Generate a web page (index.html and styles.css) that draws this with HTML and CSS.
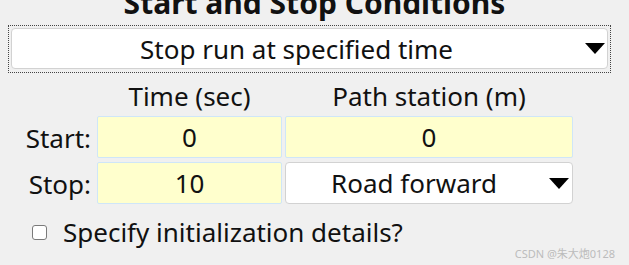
FILE: index.html
```html
<!DOCTYPE html>
<html lang="en">
<head>
  <meta charset="UTF-8">
  <title>Start and Stop Conditions</title>
  <link rel="stylesheet" href="styles.css">
</head>
<body>
  <div class="panel">
    <h1 class="title">Start and Stop Conditions</h1>

    <!-- Główny wybór warunku zatrzymania -->
    <div class="focus-ring">
      <div class="combo combo-main">
        <span class="combo-text">Stop run at specified time</span>
        <span class="arrow"></span>
      </div>
    </div>

    <div class="grid">
      <div></div>
      <div class="col-head">Time (sec)</div>
      <div class="col-head">Path station (m)</div>

      <div class="row-label">Start:</div>
      <div class="field">0</div>
      <div class="field">0</div>

      <div class="row-label">Stop:</div>
      <div class="field">10</div>
      <div class="combo combo-small">
        <span class="combo-text">Road forward</span>
        <span class="arrow"></span>
      </div>
    </div>

    <label class="check-row">
      <span class="checkbox"></span>
      <span>Specify initialization details?</span>
    </label>
  </div>

  <div class="watermark">CSDN @朱大炮0128</div>
</body>
</html>
```

FILE: styles.css
```css
html, body {
  margin: 0;
  height: 100%;
  overflow: hidden;
}
body {
  background-color: #f0f0f0;
  font-family: 'Noto Sans', 'Open Sans', sans-serif;
  color: #111;
  position: relative;
}
.panel {
  width: 629px;
}
.title {
  margin: -17px 0 0 0;
  height: 42px;
  text-align: center;
  font-size: 30px;
  font-weight: bold;
  line-height: 40px;
  color: #111;
}

/* Pole wyboru z kropkowaną ramką fokusu */
.focus-ring {
  margin-left: 8px;
  width: 597px;
  height: 43px;
  border: 1px dotted #444;
  padding: 2px 2px 1px 2px;
}
.combo {
  box-sizing: border-box;
  background-color: #fff;
  border: 1px solid #d2d2d2;
  border-radius: 4px;
  position: relative;
  display: flex;
  align-items: center;
  justify-content: center;
}
.combo-main {
  height: 41px;
  font-size: 26px;
  padding-right: 26px;
}
.combo-small {
  height: 42px;
  font-size: 26px;
  padding-right: 30px;
}
.arrow {
  position: absolute;
  right: 3px;
  top: 50%;
  margin-top: -5px;
  width: 0;
  height: 0;
  border-left: 10px solid transparent;
  border-right: 10px solid transparent;
  border-top: 11px solid #000;
}
.combo-main .arrow { right: 2px; margin-top: -6px; }

.grid {
  display: grid;
  grid-template-columns: 93px 185px 288px;
  grid-template-rows: 39px 42px 42px;
  column-gap: 3px;
  row-gap: 4px;
  margin-left: 1px;
}
.col-head {
  align-self: end;
  text-align: center;
  font-size: 26px;
  line-height: 30px;
  padding-bottom: 1px;
}
.row-label {
  text-align: right;
  font-size: 26px;
  line-height: 44px;
  padding-right: 3px;
}
.field {
  box-sizing: border-box;
  background-color: #ffffcd;
  border: 1px solid #cfe6f8;
  border-radius: 2px;
  text-align: center;
  font-size: 26px;
  line-height: 40px;
}

.check-row {
  display: flex;
  align-items: center;
  gap: 16px;
  margin-top: 10px;
  margin-left: 32px;
  font-size: 26px;
}
.checkbox {
  width: 13px;
  height: 13px;
  border: 1px solid #7a7a7a;
  border-radius: 3px;
  background-color: #fff;
}

.watermark {
  position: absolute;
  right: 14px;
  bottom: 4px;
  font-family: 'Noto Sans', 'Noto Sans CJK SC', sans-serif;
  font-size: 11px;
  color: #bcbcbc;
}
```
